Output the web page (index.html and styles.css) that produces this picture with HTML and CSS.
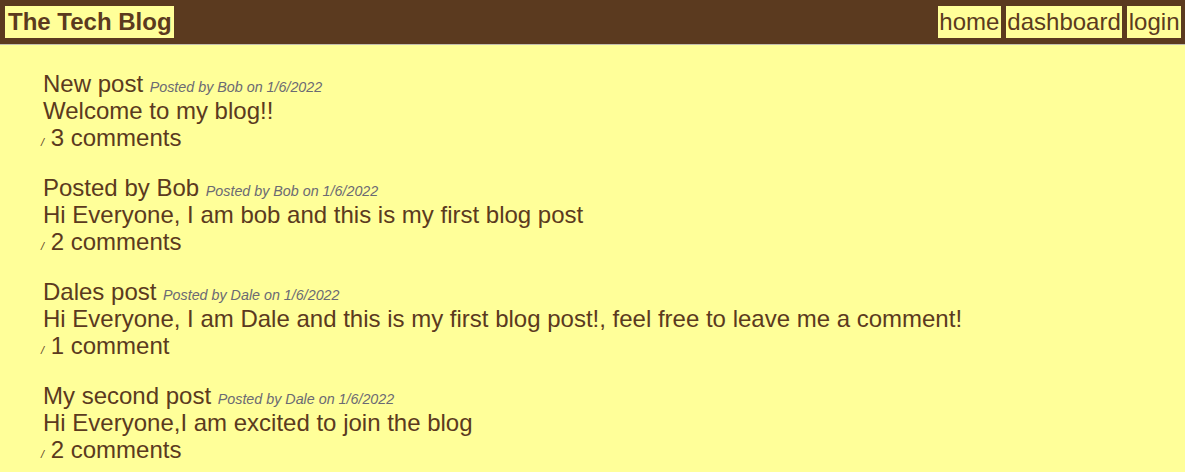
FILE: index.html
```html
<!DOCTYPE html>
<html lang="en">
<head>
<meta charset="utf-8">
<title>The Tech Blog</title>
<link rel="stylesheet" href="styles.css">
</head>
<body>
<header class="topbar">
  <h1 class="brand">The Tech Blog</h1>
  <nav class="nav">
    <a class="nav-link" href="#">home</a>
    <a class="nav-link" href="#">dashboard</a>
    <a class="nav-link" href="#">login</a>
  </nav>
</header>
<main class="posts">
  <article class="post">
    <div class="post-head"><span class="post-title">New post</span> <span class="meta">Posted by Bob on 1/6/2022</span></div>
    <p class="post-body">Welcome to my blog!!</p>
    <p class="post-comments"><i class="icon">/</i> 3 comments</p>
  </article>
  <article class="post">
    <div class="post-head"><span class="post-title">Posted by Bob</span> <span class="meta">Posted by Bob on 1/6/2022</span></div>
    <p class="post-body">Hi Everyone, I am bob and this is my first blog post</p>
    <p class="post-comments"><i class="icon">/</i> 2 comments</p>
  </article>
  <article class="post">
    <div class="post-head"><span class="post-title">Dales post</span> <span class="meta">Posted by Dale on 1/6/2022</span></div>
    <p class="post-body">Hi Everyone, I am Dale and this is my first blog post!, feel free to leave me a comment!</p>
    <p class="post-comments"><i class="icon">/</i> 1 comment</p>
  </article>
  <article class="post">
    <div class="post-head"><span class="post-title">My second post</span> <span class="meta">Posted by Dale on 1/6/2022</span></div>
    <p class="post-body">Hi Everyone,I am excited to join the blog</p>
    <p class="post-comments"><i class="icon">/</i> 2 comments</p>
  </article>
</main>
</body>
</html>
```
FILE: styles.css
```css
html, body {
  margin: 0;
  padding: 0;
}
body {
  background: #ffff99;
  color: #5b3a1e;
  font-family: "Liberation Sans", Arial, Helvetica, sans-serif;
  font-size: 24px;
}
.topbar {
  display: flex;
  justify-content: space-between;
  align-items: center;
  background: #5b3a1f;
  height: 45px;
  padding: 0 4px 0 5px;
  box-sizing: border-box;
  border-bottom: 1px solid #c2bfae;
}
.brand {
  margin: 0;
  font-size: 24px;
  font-weight: bold;
  background: #ffff99;
  color: #5b3a1e;
  padding: 2px 2px 2px 3px;
  line-height: 28px;
}
.nav {
  display: flex;
  gap: 5px;
}
.nav-link {
  background: #ffff99;
  color: #5b3a1e;
  text-decoration: none;
  padding: 2px 1.5px;
  line-height: 28px;
}
.posts {
  padding: 25px 0 0 43px;
}
.post {
  margin-bottom: 23px;
}
.post-head, .post-body, .post-comments {
  margin: 0;
  line-height: 27px;
}
.meta {
  font-size: 14.3px;
  font-style: italic;
  color: #6b6a73;
  line-height: 14px;
}
.post-comments {
  margin-left: -2px;
}
.icon {
  font-size: 11px;
  font-style: italic;
  line-height: 11px;
}
```
